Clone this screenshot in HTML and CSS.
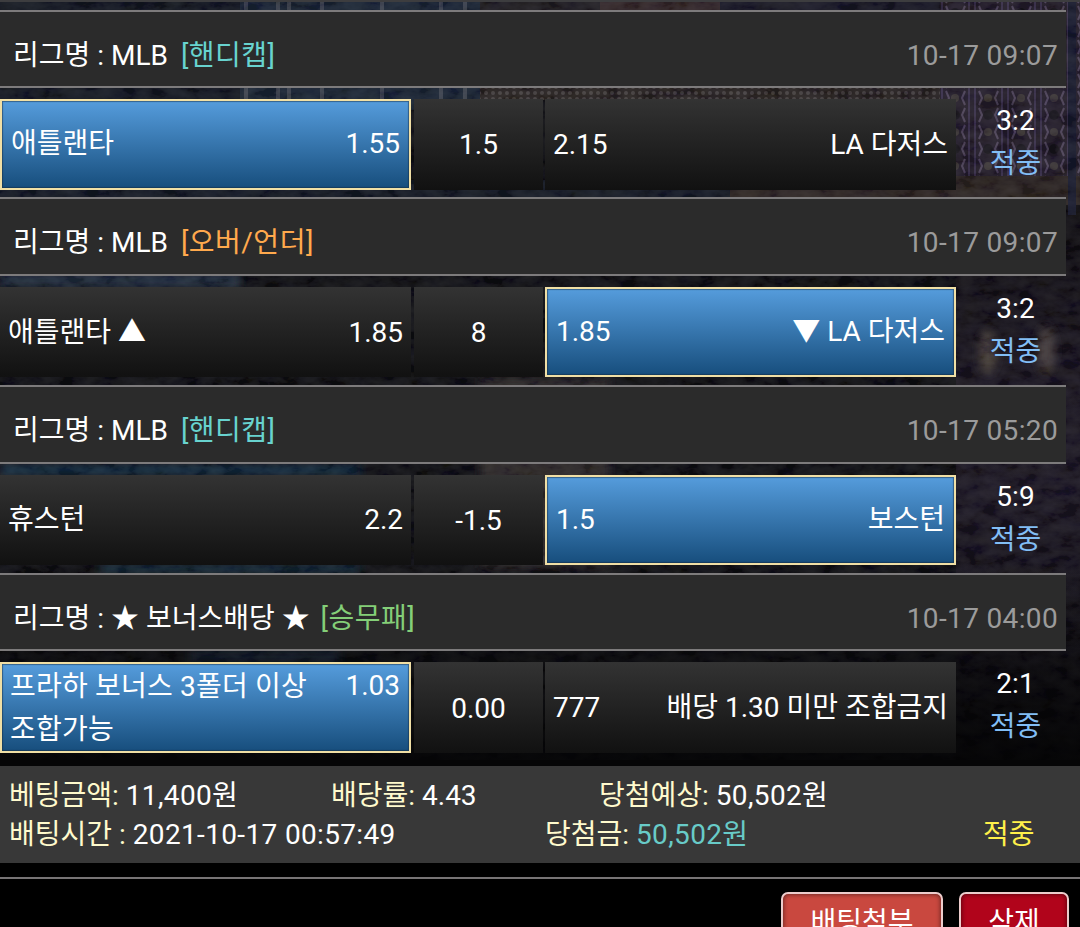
FILE: index.html
```html
<!DOCTYPE html>
<html lang="ko">
<head>
    <meta charset="UTF-8">
    <meta name="viewport" content="width=device-width, initial-scale=1.0">
    <title>배팅내역</title>
    <link rel="stylesheet" href="styles.css">
</head>
<body>
    <!-- night city backdrop -->
    <svg class="backdrop" viewBox="0 0 1080 780" aria-hidden="true">
        <defs>
            <pattern id="lattice" width="33" height="34" patternUnits="userSpaceOnUse" x="966" y="4">
                <rect width="33" height="34" fill="#211b28"/>
                <path d="M3 0v34M9 0v34" stroke="#382f4b" stroke-width="2"/>
                <path d="M13 2l3 7l-3 7M13 19l3 7l-3 7M32 2l-3 7l3 7M32 19l-3 7l3 7" stroke="#4d435a" stroke-width="2" fill="none"/>
                <circle cx="22" cy="9" r="5" fill="#15131a"/>
                <circle cx="22" cy="26" r="4" fill="#3a3535"/>
            </pattern>
            <pattern id="beads" width="7" height="6" patternUnits="userSpaceOnUse">
                <rect width="7" height="6" fill="#25201f"/>
                <circle cx="3" cy="3" r="2" fill="#444040"/>
            </pattern>
            <linearGradient id="fade" x1="0" y1="0" x2="0" y2="1">
                <stop offset="0" stop-color="#0b0a0d"/>
                <stop offset="0.3" stop-color="#17131e"/>
                <stop offset="0.5" stop-color="#191521"/>
                <stop offset="1" stop-color="#050507"/>
            </linearGradient>
            <linearGradient id="bottom" x1="0" y1="0" x2="0" y2="1">
                <stop offset="0" stop-color="#040405" stop-opacity="0"/>
                <stop offset="1" stop-color="#040405" stop-opacity="0.85"/>
            </linearGradient>
            <filter id="grain" x="0" y="0" width="100%" height="100%">
                <feTurbulence type="fractalNoise" baseFrequency="0.05 0.09" numOctaves="4" seed="8"/>
                <feColorMatrix values="0.8 0.3 0 0 -0.4  0.8 0.3 0 0 -0.42  0.8 0.1 0.2 0 -0.4  0 0 0 0 0.6"/>
            </filter>
            <filter id="soft" x="-10%" y="-10%" width="120%" height="120%"><feGaussianBlur stdDeviation="4"/></filter>
        </defs>
        <rect width="1080" height="780" fill="#0c0d11"/>
        <rect width="240" height="110" fill="#10151f"/>
        <rect x="240" width="240" height="110" fill="#172333"/>
        <path d="M246 0v110M278 0v110M289 0v110M322 0v110M382 0v110M441 0v110M465 0v110" stroke="#3b424e" stroke-width="4"/>
        <rect x="480" y="80" width="480" height="20" fill="url(#beads)"/>
        <rect x="480" width="120" height="12" fill="#1c1a20"/>
        <rect x="600" width="120" height="12" fill="#302427"/>
        <rect x="720" width="220" height="12" fill="#151522"/>
        <rect y="180" width="730" height="20" fill="#111722"/>
        <rect x="730" y="180" width="226" height="20" fill="#2a2220"/>
        <rect x="940" width="140" height="176" fill="url(#lattice)"/>
        <rect x="956" y="176" width="124" height="30" fill="#28211f"/>
        <rect x="956" y="205" width="124" height="575" fill="url(#fade)"/>
        <path d="M1072 0v215" stroke="#14172b" stroke-width="8"/>
        <g filter="url(#soft)">
            <rect x="0" y="272" width="240" height="16" fill="#1d2c3c"/>
            <rect x="480" y="378" width="130" height="190" fill="#2b2726"/>
            <rect x="0" y="464" width="360" height="12" fill="#102c3f"/>
            <rect x="100" y="564" width="260" height="10" fill="#102b3c"/>
            <rect x="190" y="650" width="150" height="14" fill="#17263a"/>
            <ellipse cx="988" cy="352" rx="9" ry="22" fill="#453c38"/>
            <ellipse cx="1046" cy="350" rx="9" ry="24" fill="#3f3938"/>
        </g>
        <rect width="1080" height="780" filter="url(#grain)" opacity="0.2"/>
        <rect y="560" width="1080" height="200" fill="url(#bottom)"/>
        <rect y="760" width="1080" height="20" fill="#050506"/>
    </svg>

    <div class="bet-list">
        <div class="match">
            <div class="league">
                <div class="league-name">리그명 : MLB <span class="type handicap">[핸디캡]</span></div>
                <div class="date">10-17 09:07</div>
            </div>
            <div class="odds">
                <div class="cell selected"><span class="team">애틀랜타</span><span>1.55</span></div>
                <div class="cell base">1.5</div>
                <div class="cell"><span>2.15</span><span class="team">LA 다저스</span></div>
                <div class="result">3:2<br><span class="hit">적중</span></div>
            </div>
        </div>

        <div class="match">
            <div class="league">
                <div class="league-name">리그명 : MLB <span class="type overunder">[오버/언더]</span></div>
                <div class="date">10-17 09:07</div>
            </div>
            <div class="odds">
                <div class="cell"><span class="team">애틀랜타 ▲</span><span>1.85</span></div>
                <div class="cell base">8</div>
                <div class="cell selected"><span>1.85</span><span class="team">▼ LA 다저스</span></div>
                <div class="result">3:2<br><span class="hit">적중</span></div>
            </div>
        </div>

        <div class="match">
            <div class="league">
                <div class="league-name">리그명 : MLB <span class="type handicap">[핸디캡]</span></div>
                <div class="date">10-17 05:20</div>
            </div>
            <div class="odds">
                <div class="cell"><span class="team">휴스턴</span><span>2.2</span></div>
                <div class="cell base">-1.5</div>
                <div class="cell selected"><span>1.5</span><span class="team">보스턴</span></div>
                <div class="result">5:9<br><span class="hit">적중</span></div>
            </div>
        </div>

        <div class="match">
            <div class="league">
                <div class="league-name">리그명 : ★ 보너스배당 ★ <span class="type windrawlose">[승무패]</span></div>
                <div class="date">10-17 04:00</div>
            </div>
            <div class="odds">
                <div class="cell selected wrapped"><span class="team">프라하 보너스 3폴더 이상 조합가능</span><span>1.03</span></div>
                <div class="cell base">0.00</div>
                <div class="cell"><span>777</span><span class="team">배당 1.30 미만 조합금지</span></div>
                <div class="result">2:1<br><span class="hit">적중</span></div>
            </div>
        </div>
    </div>

    <div class="summary">
        <div class="summary-row first">
            <div><span class="label">베팅금액:</span> <span class="amount">11,400원</span></div>
            <div><span class="label">배당률:</span> 4.43</div>
            <div><span class="label">당첨예상:</span> <span class="amount">50,502원</span></div>
        </div>
        <div class="summary-row second">
            <div><span class="label">배팅시간 :</span> <span class="amount">2021-10-17 00:57:49</span></div>
            <div><span class="label">당첨금:</span> <span class="amount prize">50,502원</span></div>
            <div class="status">적중</div>
        </div>
    </div>

    <div class="actions">
        <button class="button attach">배팅첨부</button>
        <button class="button delete">삭제</button>
    </div>
</body>
</html>
```

FILE: styles.css
```css
* {
    box-sizing: border-box;
}

body {
    margin: 0;
    height: 927px;
    overflow: hidden;
    background-color: #000;
    color: #fff;
    font-family: Roboto, "Noto Sans CJK KR", sans-serif;
    font-size: 28px;
    line-height: 43px;
}

.backdrop {
    position: absolute;
    top: 0;
    left: 0;
    width: 1080px;
    height: 780px;
    z-index: -1;
}

.bet-list {
    height: 766px;
    padding-top: 7.7px;
    border-top: 2px solid #3d3d3f;
}

.match {
    height: 187.7px;
}

.league {
    display: flex;
    justify-content: space-between;
    width: 1066px;
    height: 78.7px;
    padding: 21.9px 8px 0 13px;
    background-color: #2b2b2b;
    border-top: 2px solid #7d7b7c;
    border-bottom: 2px solid #7d7b7c;
}

.type {
    margin-left: 6px;
    letter-spacing: 0.5px;
}

.handicap {
    color: #68d3cf;
}

.overunder {
    color: #ffa94d;
}

.windrawlose {
    margin-left: 4px;
    color: #84cf78;
}

.date {
    color: #9b9b9b;
    letter-spacing: 0.35px;
}

.odds {
    display: grid;
    grid-template-columns: 411px 129px 411px 111px;
    grid-template-rows: 90.4px;
    column-gap: 3px;
    margin-top: 10.9px;
}

.cell {
    display: flex;
    justify-content: space-between;
    align-items: center;
    padding: 0 8px;
    background: linear-gradient(to bottom, #333, #111);
}

.cell.base {
    justify-content: center;
    padding-top: 1px;
}

.cell:nth-child(3) {
    margin-left: -1px;
    margin-right: 1px;
}

.cell.selected {
    align-items: flex-start;
    padding: 21px 9px 0;
    background: linear-gradient(to bottom, #559cdc, #174e7d);
    border: 2px solid #f0dfa5;
    box-shadow: inset 0 0 1px 1px rgba(20, 40, 60, 0.5);
}

.cell.selected.wrapped {
    padding: 0 9px 0 8px;
}

.wrapped .team {
    padding-top: 1px;
    margin-bottom: -1px;
    letter-spacing: 0.2px;
}

.team {
    word-break: keep-all;
}

.result {
    text-align: center;
}

.hit {
    color: #82bef5;
}

.summary {
    height: 97px;
    padding: 10px 9px;
    background-color: #383838;
    line-height: 39px;
}

.summary-row {
    display: grid;
}

.summary-row.first {
    grid-template-columns: 322px 268px 1fr;
}

.summary-row.second {
    grid-template-columns: 536px 438px 1fr;
}

.label {
    color: #fffacd;
}

.amount {
    letter-spacing: 0.35px;
}

.prize {
    color: #68cbc8;
}

.status {
    color: #fff04a;
}

.actions {
    display: flex;
    justify-content: flex-end;
    gap: 16px;
    margin-top: 14px;
    padding: 13px 11px 0 0;
    border-top: 2px solid #777475;
}

.button {
    height: 56px;
    padding: 0;
    color: #fff;
    font-family: inherit;
    font-size: 28px;
    border: 2px solid #eccccc;
    border-radius: 7px;
    box-shadow: inset 0 0 5px rgba(0, 0, 0, 0.6);
}

.attach {
    width: 162px;
    background-color: #c9483f;
}

.delete {
    width: 110px;
    background-color: #b1041b;
}
```
